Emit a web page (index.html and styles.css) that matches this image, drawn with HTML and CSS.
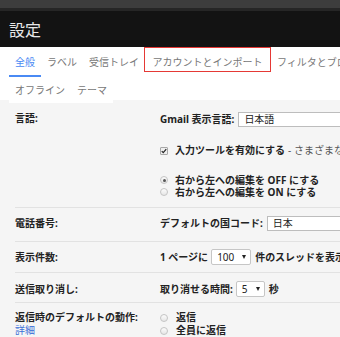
FILE: index.html
```html
<!DOCTYPE html>
<html lang="ja">
<head>
<meta charset="utf-8">
<title>設定</title>
<link rel="stylesheet" href="styles.css">
</head>
<body>
<div class="topbar"></div>
<header class="header"><h1 class="title">設定</h1></header>
<nav class="tabs">
  <div class="tab-row">
    <a class="tab active">全般</a>
    <a class="tab">ラベル</a>
    <a class="tab">受信トレイ</a>
    <a class="tab highlighted">アカウントとインポート</a>
    <a class="tab">フィルタとブロック中のアドレス</a>
  </div>
  <div class="tab-row row2">
    <a class="tab">オフライン</a>
    <a class="tab">テーマ</a>
  </div>
</nav>
<main class="settings">
  <section class="setting top lang">
    <div class="label">言語:</div>
    <div class="value">
      <div class="line field-line">Gmail 表示言語:<span class="input">日本語</span></div>
      <div class="line check-line"><span class="checkbox"><svg viewBox="0 0 8 8" width="6" height="6"><path d="M1 4.2 L3 6.2 L7 1.6" fill="none" stroke="#222" stroke-width="1.6"/></svg></span>入力ツールを有効にする <span class="muted">- さまざまな言語の入力ツールを使用できます</span></div>
      <div class="radio-group">
        <div class="radio-line"><span class="radio checked"></span>右から左への編集を OFF にする</div>
        <div class="radio-line"><span class="radio"></span>右から左への編集を ON にする</div>
      </div>
    </div>
  </section>
  <section class="setting mid phone">
    <div class="label">電話番号:</div>
    <div class="value field-line">デフォルトの国コード:<span class="input">日本</span></div>
  </section>
  <section class="setting mid count">
    <div class="label">表示件数:</div>
    <div class="value field-line">1 ページに<span class="select wide">100<i class="arrow"></i></span>件のスレッドを表示</div>
  </section>
  <section class="setting mid undo">
    <div class="label">送信取り消し:</div>
    <div class="value field-line">取り消せる時間:<span class="select narrow">5<i class="arrow"></i></span>秒</div>
  </section>
  <section class="setting top reply">
    <div class="label">返信時のデフォルトの動作:<br><a class="link">詳細</a></div>
    <div class="value">
      <div class="reply-line"><span class="radio"></span>返信</div>
      <div class="reply-line"><span class="radio"></span>全員に返信</div>
    </div>
  </section>
</main>
</body>
</html>
```
FILE: styles.css
```css
html, body {
  margin: 0;
  padding: 0;
  overflow: hidden;
}
body {
  background: #f5f5f5;
  font-family: "Noto Sans", "Noto Sans CJK JP", sans-serif;
  color: #222;
}
.topbar {
  height: 8px;
  background: #3d3d3d;
  border-bottom: 3px solid #262626;
}
.header {
  height: 36px;
  background: #131313;
  display: flex;
  align-items: center;
  padding-left: 9px;
}
.title {
  margin: 0;
  font-size: 16px;
  font-weight: normal;
  line-height: 1;
  color: #e8e8e8;
  font-family: "Noto Sans CJK JP", sans-serif;
}
.tabs {
  background: #fff;
  padding-left: 9px;
}
.tab-row {
  display: flex;
  align-items: flex-start;
  white-space: nowrap;
}
.tab {
  flex: none;
  font-size: 10px;
  line-height: 14px;
  color: #777;
  padding: 8px 6px 6px;
  border-bottom: 2px solid transparent;
  text-decoration: none;
  font-family: "Noto Sans CJK JP", sans-serif;
}
.tab.active {
  color: #4a8af4;
  border-bottom-color: #4a8af4;
}
.tab.highlighted {
  border: 1px solid #e53935;
  padding: 7px 7.5px 2px;
  margin-left: -1px;
}
.row2 .tab {
  padding: 6px 6px;
  border-bottom: 0;
  background: #fff;
  margin-bottom: -3px;
}
.settings {
  padding-left: 15px;
}
.setting {
  display: flex;
  font-size: 10px;
  line-height: 13px;
  font-weight: bold;
  color: #222;
  border-bottom: 1px solid #e2e2e2;
  white-space: nowrap;
}
.setting.top { align-items: flex-start; }
.setting.mid { align-items: center; }
.label {
  width: 145px;
  flex: none;
}
.value {
  flex: 1;
  min-width: 0;
}
.lang { padding: 12px 0 9px; }
.phone { padding: 7px 0 10px; }
.count { padding: 7px 0 7px; }
.undo { padding: 8px 0 5px; }
.reply { padding: 8px 0 0; border-bottom: 0; }
.field-line {
  display: flex;
  align-items: center;
  height: 16px;
}
.lang .field-line { height: 15px; }
.input {
  flex: none;
  box-sizing: border-box;
  height: 15px;
  width: 220px;
  margin-left: 4px;
  padding: 0 5px;
  border: 1px solid #bdbdbd;
  background: #fff;
  font-weight: normal;
  line-height: 13px;
  color: #222;
}
.select {
  flex: none;
  box-sizing: border-box;
  height: 16px;
  margin: 0 4px 0 3px;
  padding: 0 4px 0 5px;
  border: 1px solid #c6c6c6;
  border-radius: 2px;
  background: #fff;
  display: flex;
  align-items: center;
  justify-content: space-between;
  font-weight: normal;
}
.select.wide { width: 40px; }
.select.narrow { width: 29px; }
.arrow {
  width: 0;
  height: 0;
  border-left: 2.5px solid transparent;
  border-right: 2.5px solid transparent;
  border-top: 4px solid #222;
}
.check-line {
  margin-top: 17px;
  display: flex;
  align-items: center;
}
.checkbox {
  box-sizing: border-box;
  width: 8px;
  height: 8px;
  margin-right: 7px;
  border: 1px solid #a8a8a8;
  border-radius: 1px;
  background: #efefef;
  display: flex;
  align-items: center;
  justify-content: center;
  flex: none;
}
.checkbox svg { display: block; }
.muted {
  font-weight: normal;
  color: #555;
  margin-left: 3px;
}
.radio-group { margin-top: 17px; }
.radio-line, .reply-line {
  display: flex;
  align-items: center;
  line-height: 12px;
}
.reply-line { line-height: 13px; }
.radio {
  box-sizing: border-box;
  width: 8px;
  height: 8px;
  margin-right: 7px;
  border: 1px solid #c4c4c4;
  border-radius: 50%;
  background: linear-gradient(#fcfcfc, #e6e6e6);
  flex: none;
  position: relative;
}
.reply-line .radio { margin-right: 8px; }
.radio.checked::after {
  content: "";
  position: absolute;
  left: 1.5px;
  top: 1.5px;
  width: 3px;
  height: 3px;
  border-radius: 50%;
  background: #555;
}
.link {
  color: #3a6fd8;
  font-weight: normal;
  text-decoration: none;
}
```
